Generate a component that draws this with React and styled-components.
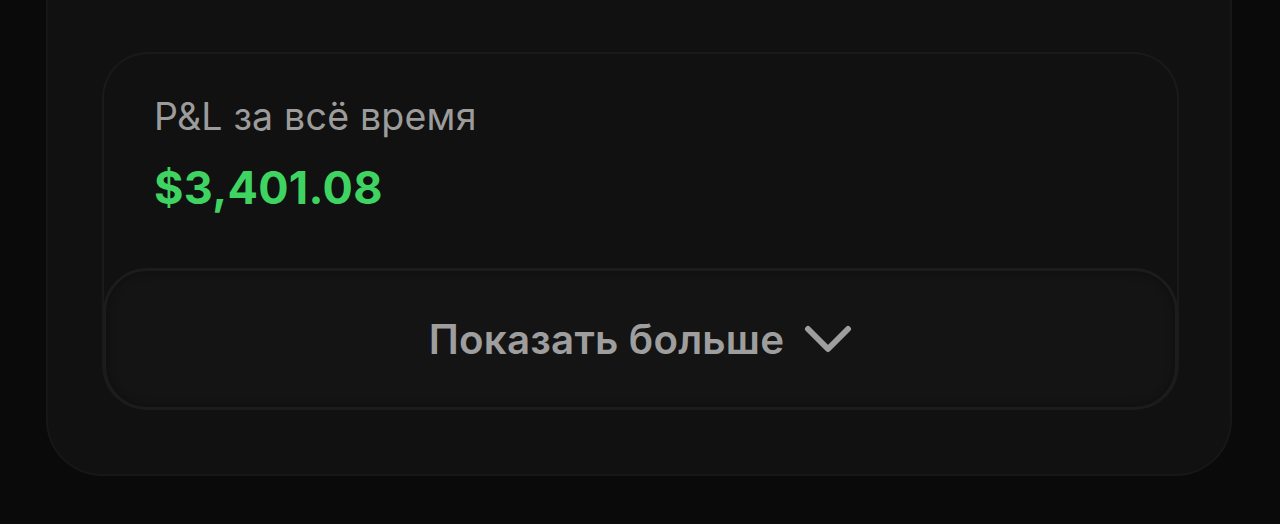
import React from 'react';
import styled, { createGlobalStyle } from 'styled-components';

const GlobalStyle = createGlobalStyle`
  html, body {
    margin: 0;
    padding: 0;
    background: #0a0a0a;
    font-family: Inter, "Noto Sans", "Liberation Sans", sans-serif;
  }
`;

const Page = styled.div`
  width: 1280px;
  height: 524px;
  overflow: hidden;
  background: #0a0a0a;
`;

const OuterCard = styled.div`
  margin-left: 46px;
  width: 1186px;
  box-sizing: border-box;
  padding: 52px 51px 64px 54px;
  background: #111111;
  border: 2px solid #171717;
  border-top: none;
  border-radius: 0 0 56px 56px;
`;

const StatCard = styled.div`
  box-sizing: border-box;
  background: #111111;
  border: 2px solid #1a1a1a;
  border-bottom: none;
  border-radius: 46px 46px 44px 44px;
  display: flex;
  flex-direction: column;
`;

const StatBody = styled.div`
  padding: 40px 50px 54px;
  display: flex;
  flex-direction: column;
  gap: 22px;
`;

const Label = styled.div`
  font-size: 37.5px;
  line-height: 46px;
  font-weight: 400;
  color: #9c9c9c;
  letter-spacing: 0.2px;
`;

const Amount = styled.div`
  font-size: 45px;
  line-height: 52px;
  font-weight: 700;
  color: #3fd461;
  letter-spacing: 0.3px;
`;

const MoreButton = styled.button`
  margin: 0 -1px;
  height: 142px;
  box-sizing: border-box;
  border: 3px solid #1c1c1c;
  border-radius: 44px;
  background: #141414;
  box-shadow: inset 0 0 10px rgba(0, 0, 0, 0.35);
  display: flex;
  align-items: center;
  justify-content: center;
  gap: 20px;
  cursor: pointer;
  font-family: inherit;
`;

const MoreText = styled.span`
  font-size: 40.3px;
  font-weight: 600;
  color: #9e9e9e;
  letter-spacing: 0.2px;
`;

const Chevron = () => (
  <svg width="48" height="30" viewBox="0 0 48 30" fill="none">
    <path
      d="M4 5 L24 25 L44 5"
      stroke="#9e9e9e"
      strokeWidth="6"
      strokeLinecap="round"
      strokeLinejoin="round"
    />
  </svg>
);

export default function App() {
  return (
    <Page>
      <GlobalStyle />
      <OuterCard>
        <StatCard>
          <StatBody>
            <Label>P&amp;L за всё время</Label>
            <Amount>$3,401.08</Amount>
          </StatBody>
          <MoreButton>
            <MoreText>Показать больше</MoreText>
            <Chevron />
          </MoreButton>
        </StatCard>
      </OuterCard>
    </Page>
  );
}
